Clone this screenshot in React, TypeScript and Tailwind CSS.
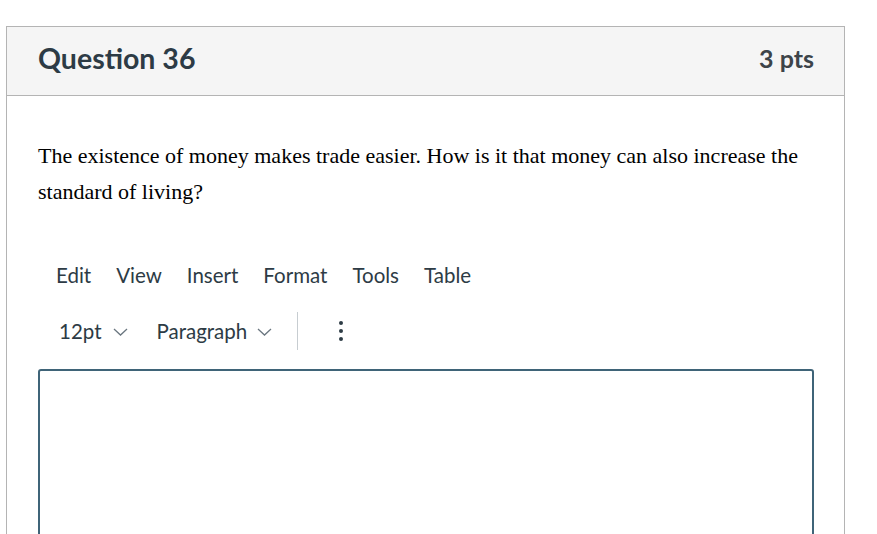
const menus = ["Edit", "View", "Insert", "Format", "Tools", "Table"];

function Kebab() {
  return (
    <svg width="6" height="22" viewBox="0 0 6 22" aria-hidden className="text-[#2d3b45]">
      <circle cx="3" cy="3" r="2" fill="currentColor" />
      <circle cx="3" cy="11" r="2" fill="currentColor" />
      <circle cx="3" cy="19" r="2" fill="currentColor" />
    </svg>
  );
}

function Caret({ className }: { className?: string }) {
  return (
    <svg width="15" height="8" viewBox="0 0 15 8" aria-hidden className={className}>
      <polyline points="1,1 7.5,7 14,1" fill="none" stroke="currentColor" strokeWidth="1.3" />
    </svg>
  );
}

export default function App() {
  return (
    <div className="h-screen overflow-hidden bg-white font-['Lato','Liberation_Sans',sans-serif]">
      <div className="ml-[6px] mt-[26px] w-[839px] border border-b-0 border-[#b4b4b4]">
        {/* question header */}
        <div className="flex h-[69px] items-center justify-between border-b border-[#b4b4b4] bg-[#f5f5f5] pb-[5px] pl-[31px] pr-[30px]">
          <h2 className="text-[28.5px] font-bold leading-none text-[#2d3b45]">Question 36</h2>
          <span className="text-[25px] font-bold leading-none text-[#3d4449]">3 pts</span>
        </div>

        <div className="px-[31px] pt-[42px]">
          <p className="font-['Liberation_Serif','Times_New_Roman',serif] text-[22px] leading-[36px] text-black">
            The existence of money makes trade easier. How is it that money can also increase the
            standard of living?
          </p>

          {/* editor */}
          <div className="mt-[53px]">
            <div className="flex gap-[25px] pl-[18px] text-[20.5px] leading-[24px] text-[#2d3b45]">
              {menus.map((m) => (
                <span key={m}>{m}</span>
              ))}
            </div>

            <div className="mt-[25px] flex h-[38px] items-center pl-[21px] text-[20.5px] leading-[24px] text-[#2d3b45]">
              <span>12pt</span>
              <Caret className="ml-[11px] mt-[2px] text-[#6b7780]" />
              <span className="ml-[29px]">Paragraph</span>
              <Caret className="ml-[10px] mt-[2px] text-[#6b7780]" />
              <div className="ml-[25px] h-[38px] w-px bg-[#c7cdd1]" />
              <div className="ml-[40px] flex items-center">
                <Kebab />
              </div>
            </div>

            <div className="mt-[19px] h-[220px] w-[776px] rounded-t-[3px] border-2 border-[#3f6478]" />
          </div>
        </div>
      </div>
    </div>
  );
}
